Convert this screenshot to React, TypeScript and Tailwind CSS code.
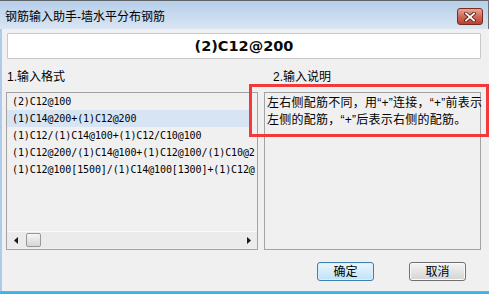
import React from "react";

const rows = [
  "(2)C12@100",
  "(1)C14@200+(1)C12@200",
  "(1)C12/(1)C14@100+(1)C12/C10@100",
  "(1)C12@200/(1)C14@100+(1)C12@100/(1)C10@2",
  "(1)C12@100[1500]/(1)C14@100[1300]+(1)C12@",
];

export default function App() {
  return (
    <div className="w-[489px] h-[294px] relative overflow-hidden bg-[#f0f0f0] flex flex-col text-black font-['Liberation_Sans','Noto_Sans_CJK_SC',sans-serif] text-[12px]">
      {/* title bar */}
      <div className="h-[29px] shrink-0 flex items-start border-t border-[#5f6468] border-r border-r-[#6a6f73] bg-gradient-to-b from-[#b7cfe9] to-[#d9e5f3]">
        <span className="ml-[5px] mt-[9px] leading-[14px] whitespace-nowrap">钢筋输入助手-墙水平分布钢筋</span>
        <div className="ml-auto mt-[7px] mr-[5px] w-[26px] h-[17px] rounded-[3px] border border-[#7b2a1e] bg-gradient-to-b from-[#e8a696] via-[#cf6a59] to-[#b9422f] flex items-center justify-center">
          <svg width="12" height="10" viewBox="0 0 12 10">
            <path d="M2 1.5 L10 8.5 M10 1.5 L2 8.5" stroke="#5b1e14" strokeWidth="3.6" strokeLinecap="square" />
            <path d="M2 1.5 L10 8.5 M10 1.5 L2 8.5" stroke="#ffffff" strokeWidth="1.8" strokeLinecap="square" />
          </svg>
        </div>
      </div>

      {/* body */}
      <div className="flex-1 flex flex-col border-l-2 border-[#aecbea]">
        <div className="mt-[4px] ml-[5px] mr-[8px] h-[26px] bg-white border border-[#c9c9c9] rounded-[1px] flex items-center justify-center">
          <span className="font-['DejaVu_Sans',sans-serif] font-bold text-[14.5px] leading-none text-[#0a0a0a]">(2)C12@200</span>
        </div>

        <div className="mt-[11px] flex">
          {/* left column */}
          <div className="ml-[4px] w-[252px] flex flex-col">
            <div className="h-[14px] leading-[14px] pl-[1px]">1.输入格式</div>
            <div className="mt-[8px] h-[158px] border border-[#a3a3a3] flex flex-col">
              <div className="flex-1 overflow-hidden">
                {rows.map((r, i) => (
                  <div
                    key={i}
                    className={`h-[17px] flex items-center pl-[5px] w-[244px] whitespace-nowrap font-['DejaVu_Sans_Mono',monospace] text-[10px] tracking-[-0.1px] ${i === 1 ? "bg-[#d6e4f3]" : ""}`}
                  >
                    {r}
                  </div>
                ))}
              </div>
              <div className="h-[17px] mb-[1px] bg-[#ebebeb] border-t border-[#fafafa] flex items-center relative">
                <div className="w-[17px] h-full flex items-center justify-center">
                  <svg width="4" height="7" viewBox="0 0 4 7">
                    <path d="M4 0 L0 3.5 L4 7 Z" fill="#1a1a1a" />
                  </svg>
                </div>
                <div className="ml-[2px] w-[15px] h-[14px] rounded-[2px] border border-[#979797] bg-gradient-to-b from-[#f6f6f6] to-[#d6d6d6]" />
                <div className="ml-auto w-[17px] h-full flex items-center justify-center">
                  <svg width="4" height="7" viewBox="0 0 4 7">
                    <path d="M0 0 L4 3.5 L0 7 Z" fill="#1a1a1a" />
                  </svg>
                </div>
              </div>
            </div>
          </div>

          {/* right column */}
          <div className="ml-[6px] w-[217px] flex flex-col">
            <div className="h-[14px] leading-[14px] pl-[9px]">2.输入说明</div>
            <div className="mt-[8px] h-[158px] border border-[#a3a3a3] pl-[2px] pt-[2px]">
              <div className="leading-[17px] whitespace-nowrap tracking-[0.25px]">
                左右侧配筋不同，用“+”连接，“+”前表示
                <br />
                左侧的配筋，“+”后表示右侧的配筋。
              </div>
            </div>
          </div>
        </div>

        <div className="mt-[12px] flex">
          <button className="ml-[315px] w-[57px] h-[19px] rounded-[3px] border border-[#3c7fb1] bg-gradient-to-b from-[#eaf6fd] to-[#bfe2f6] shadow-[inset_0_0_0_1px_#d9f0fc] flex items-center justify-center leading-none">
            确定
          </button>
          <button className="ml-[35px] w-[57px] h-[19px] rounded-[3px] border border-[#707070] bg-gradient-to-b from-[#f4f4f4] to-[#d4d4d4] shadow-[inset_0_0_0_1px_#fbfbfb] flex items-center justify-center leading-none">
            取消
          </button>
        </div>
      </div>

      <div className="h-[1px] shrink-0 bg-[#a0a0a0]" />
      <div className="h-[2px] shrink-0 bg-[#3db3e6]" />

      {/* red annotation rectangle */}
      <div className="absolute left-[249px] top-[84px] w-[240px] h-[53px] border-[3px] border-[#f23a3a]" />
    </div>
  );
}
